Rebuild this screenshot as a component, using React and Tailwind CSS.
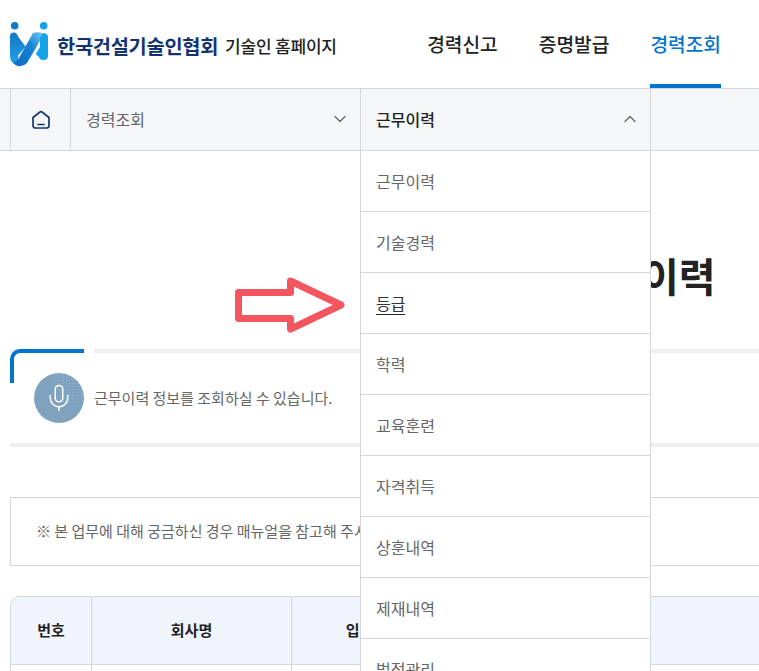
import { ChevronDown, ChevronUp, Mic } from 'lucide-react';

const subMenu = ['근무이력', '기술경력', '등급', '학력', '교육훈련', '자격취득', '상훈내역', '제재내역', '벌점관리'];

const Logo = () => (
  <svg width="42" height="48" viewBox="0 0 42 48" className="shrink-0">
    <defs>
      <linearGradient id="stripe" x1="0" y1="1" x2="1" y2="0">
        <stop offset="0" stopColor="#0f6cbc" />
        <stop offset="0.6" stopColor="#1583d6" />
        <stop offset="1" stopColor="#7ccaf2" />
      </linearGradient>
      <linearGradient id="leftBar" x1="0" y1="0" x2="0" y2="1">
        <stop offset="0" stopColor="#1878c8" />
        <stop offset="1" stopColor="#1fa2ea" />
      </linearGradient>
    </defs>
    <circle cx="4.7" cy="3.8" r="3.8" fill="#1278c8" />
    <circle cx="33.7" cy="3.8" r="3.8" fill="#12a0e6" />
    <path d="M0 14 Q0 10.5 4 10.5 Q7 10.5 8.3 15 L15.7 24.7 L8.3 33 L8.3 37 L11 44 Q0 43 0 34 Z" fill="url(#leftBar)" />
    <path d="M23 11 Q27 9.5 33 11 L31 17 L17 41 Q13 45 8 44 Q4.5 43 3 40 Q7 40.5 9.5 35 Z" fill="url(#stripe)" />
    <path d="M33 11 Q38 11.5 38 15 L38 34 Q38 38 33.5 38 Q29.5 38 29 35 L25.7 32 L30 25 L30 16 Z" fill="#13a3ea" />
  </svg>
);

const HomeIcon = () => (
  <svg width="20" height="20" viewBox="0 0 20 20" fill="none" stroke="#15376e" strokeWidth="1.7" strokeLinejoin="round" strokeLinecap="round">
    <path d="M2 7.5 L9 2 Q10 1.4 11 2 L18 7.5 V15.5 Q18 18 15.5 18 H4.5 Q2 18 2 15.5 Z" />
    <path d="M7 14.5 H13" />
  </svg>
);

const MicBadge = () => (
  <div className="relative flex h-[50px] w-[50px] shrink-0 items-center justify-center overflow-hidden rounded-full bg-[#7fa3bf]">
    <div className="absolute right-0 top-0 h-[31px] w-[31px] bg-[radial-gradient(#98b6cc_1px,transparent_1px)] bg-[length:3px_3px]" />
    <Mic size={30} strokeWidth={1.2} className="relative text-white" />
  </div>
);

export default function App() {
  return (
    <div className="relative h-[671px] w-[759px] overflow-hidden bg-white font-['Noto_Sans_CJK_KR',sans-serif] text-[#222]">
      <header className="flex h-[88px] items-center justify-between pl-[10px] pr-[38px]">
        <div className="flex items-center pt-[4px]">
          <Logo />
          <span className="ml-[5px] text-[19.8px] font-bold tracking-[-0.3px] text-[#12336f]">한국건설기술인협회</span>
          <span className="ml-[7px] text-[17px] font-medium tracking-[-0.2px] text-[#222]">기술인 홈페이지</span>
        </div>
        <nav className="flex h-full gap-[41px] text-[19.2px] font-medium">
          <a className="flex items-center border-b-4 border-transparent pt-[4px]">경력신고</a>
          <a className="flex items-center border-b-4 border-transparent pt-[4px]">증명발급</a>
          <a className="flex items-center border-b-4 border-[#0074d0] pt-[4px] text-[#0074d0]">경력조회</a>
        </nav>
      </header>

      <div className="relative z-10 flex h-[63px] border-y border-[#d6d6d6] bg-[#f5f6f8] pl-[10px]">
        <div className="flex w-[60px] items-center justify-center border-l border-[#d6d6d6]">
          <HomeIcon />
        </div>
        <div className="flex w-[290px] items-center justify-between border-l border-[#d6d6d6] pb-[1px] pl-[15px] pr-[10px] text-[#666]">
          <span className="text-[16px]">경력조회</span>
          <ChevronDown size={20} strokeWidth={1.5} className="text-[#666]" />
        </div>
        <div className="relative flex w-[291px] items-center justify-between border-x border-[#d6d6d6] pb-[1px] pl-[15px] pr-[10px]">
          <span className="text-[16px] font-medium">근무이력</span>
          <ChevronUp size={20} strokeWidth={1.5} className="text-[#666]" />
          <ul className="absolute left-[-1px] top-[62px] w-[291px] border-x border-[#d6d6d6] bg-white">
            {subMenu.map((item) => (
              <li key={item} className="flex h-[61px] items-center border-b border-[#d6d6d6] pl-[15px] text-[16px] text-[#666]">
                {item === '등급' ? <span className="border-b border-[#222] leading-[22px] text-[#333]">{item}</span> : item}
              </li>
            ))}
          </ul>
        </div>
      </div>

      <main className="ml-[10px] w-[1264px]">
        <h1 className="mb-[49px] pt-[99px] text-center text-[40px] font-bold leading-[50px]">근무이력</h1>

        <section className="relative flex h-[98px] items-center gap-[10px] border-y-4 border-[#eeeeee] pl-[24px]">
          <div className="absolute -top-[4px] left-0 h-[34px] w-[74px] rounded-tl-[10px] border-l-4 border-t-4 border-[#0074d0]" />
          <div className="absolute -top-[4px] left-[74px] h-[4px] w-[10px] bg-white" />
          <MicBadge />
          <p className="text-[15px] text-[#666]">근무이력 정보를 조회하실 수 있습니다.</p>
        </section>

        <div className="mt-[50px] flex h-[69px] items-center border border-[#d6d6d6] pl-[25px] text-[15px] text-[#666]">
          ※ 본 업무에 대해 궁금하신 경우 매뉴얼을 참고해 주시기 바랍니다.
        </div>

        <div className="mt-[30px] overflow-hidden rounded-tl-[10px] border-l border-t border-[#d6d6d6]">
          <div className="grid h-[68px] grid-cols-[81px_200px_150px_1fr] items-stretch border-b border-[#d6d6d6] bg-[#f0f4fc] text-[15px] font-bold">
            <div className="flex items-center justify-center border-r border-[#d6d6d6]">번호</div>
            <div className="flex items-center justify-center border-r border-[#d6d6d6]">회사명</div>
            <div className="flex items-center justify-center border-r border-[#d6d6d6]">입사일</div>
            <div />
          </div>
          <div className="grid h-[60px] grid-cols-[81px_200px_150px_1fr]">
            <div className="border-r border-[#d6d6d6]" />
            <div className="border-r border-[#d6d6d6]" />
            <div className="border-r border-[#d6d6d6]" />
            <div />
          </div>
        </div>
      </main>

      <svg width="116" height="62" viewBox="0 0 116 62" className="absolute left-[232px] top-[274px]" fill="#ffffff" stroke="#f4565f" strokeWidth="7" strokeLinejoin="round">
        <path d="M6.5 18.5 H58.5 V7 L109 31 L58.5 55 V44.5 H6.5 Z" />
      </svg>
    </div>
  );
}
